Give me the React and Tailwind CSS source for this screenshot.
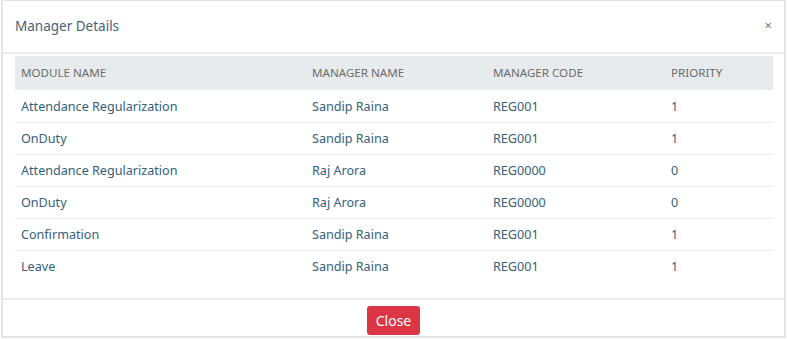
export default function App() {
  const rows = [
    ["Attendance Regularization", "Sandip Raina", "REG001", "1"],
    ["OnDuty", "Sandip Raina", "REG001", "1"],
    ["Attendance Regularization", "Raj Arora", "REG0000", "0"],
    ["OnDuty", "Raj Arora", "REG0000", "0"],
    ["Confirmation", "Sandip Raina", "REG001", "1"],
    ["Leave", "Sandip Raina", "REG001", "1"],
  ];
  const cols = ["w-[291px]", "w-[181px]", "w-[178px]", "w-[108px]"];
  return (
    <div className="w-[787px] h-[339px] bg-white" style={{ fontFamily: '"Noto Sans", sans-serif' }}>
      <div className="ml-px w-[785px] h-[338px] border-2 border-t border-[#e4e4e4] flex flex-col">
        <div className="h-[53px] flex items-center justify-between pl-[12px] pr-[12px] pb-[1px] border-b-2 border-[#e9ecef]">
          <span className="text-[13.5px] text-[#46627a]">Manager Details</span>
          <span className="text-[13px] text-[#777]">×</span>
        </div>
        <div className="pl-[12px] pt-[2px]">
          <table className="w-[758px] border-collapse">
            <thead>
              <tr className="bg-[#e8ebee] h-[34px]">
                {["MODULE NAME", "MANAGER NAME", "MANAGER CODE", "PRIORITY"].map((h, i) => (
                  <th key={h} className={`${cols[i]} text-left font-normal text-[11.6px] text-[#6b6b6b] pl-[6px]`}>{h}</th>
                ))}
              </tr>
            </thead>
            <tbody>
              {rows.map((r, ri) => (
                <tr key={ri} className={`h-[32px] ${ri < rows.length - 1 ? "border-b border-[#ebebeb]" : ""}`}>
                  {r.map((c, i) => (
                    <td key={i} className="pl-[6px] pt-[3px] text-[12.6px] text-[#34607c]">{c}</td>
                  ))}
                </tr>
              ))}
            </tbody>
          </table>
        </div>
        <div className="mt-auto h-[38px] border-t-2 border-[#e9ecef] flex items-start justify-center pt-[6px]">
          <button className="h-[29px] px-[9px] rounded-[3px] bg-[#dc3545] text-white text-[14px] leading-none">Close</button>
        </div>
      </div>
    </div>
  );
}
